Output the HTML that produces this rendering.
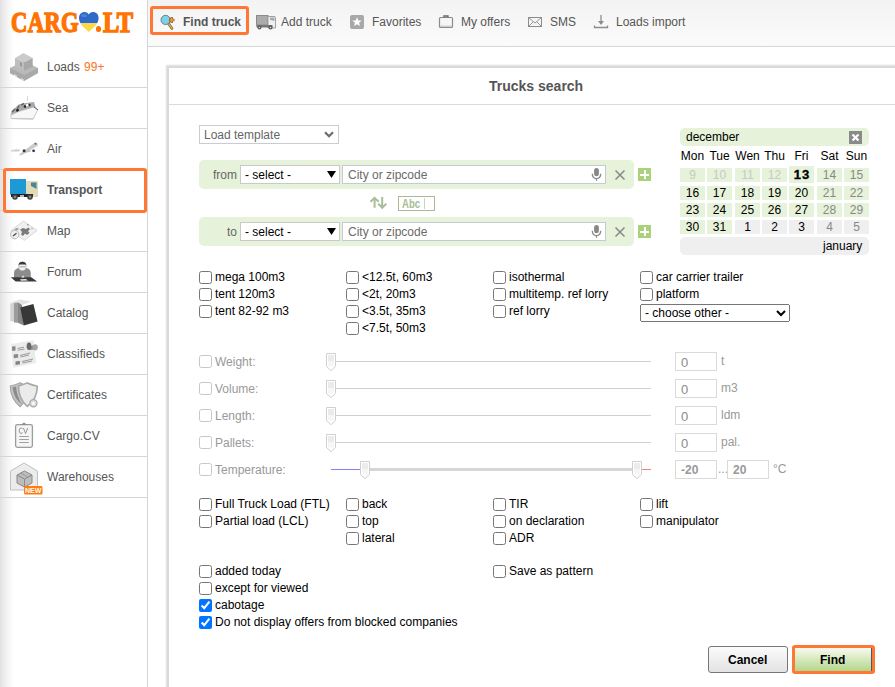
<!DOCTYPE html>
<html><head><meta charset="utf-8">
<style>
*{box-sizing:border-box}
html,body{margin:0;padding:0;width:895px;height:687px;overflow:hidden;background:#fff;font-family:"Liberation Sans",sans-serif;font-size:12px;color:#000}
.a{position:absolute}
.t{position:absolute;white-space:nowrap;line-height:14px}
#side{position:absolute;left:0;top:0;width:148px;height:687px;background:linear-gradient(to right,#e2e2e2 0px,#efefef 5px,#f7f7f7 9px,#fdfdfd 13px,#fff 16px);border-right:1px solid #d4d4d4}
.sep{position:absolute;left:0;width:147px;height:1px;background:#d6d6d6}
.si{position:absolute;left:47px;color:#555;line-height:14px;white-space:nowrap}
#top{position:absolute;left:148px;top:0;width:747px;height:47px;background:linear-gradient(#f3f3f3,#fbfbfb);border-bottom:1px solid #d6d6d6}
.nv{position:absolute;top:15px;color:#555;line-height:14px;white-space:nowrap}
.ob{position:absolute;border:3px solid #fe7834;border-radius:3px}
#dlg{position:absolute;left:169px;top:68px;width:760px;height:700px;background:#fff;box-shadow:0 0 0 2px #d9d9d9,0 0 1.5px 3px #dedede}
input[type=checkbox]{position:absolute;margin:0;width:13px;height:13px}
.lb{position:absolute;white-space:nowrap;line-height:14px}
.gr{color:#999}
.green{position:absolute;background:#e6f2d9;border-radius:5px}
.sel{position:absolute;background:#fff;border:1px solid #c9c9c9}
.cell{position:absolute;width:25px;height:14px;line-height:14px;text-align:center;background:#e6f2d9}
.cell.j{background:#efefef}
.cell.p{color:#c8c8c8}
.cell.w{color:#888}
.inp{position:absolute;width:42px;height:19px;border:1px solid #dadada;background:#fff;color:#999;font-weight:bold;line-height:19px;padding-left:5px;-webkit-font-smoothing:antialiased}
.inp.z{font-weight:normal;font-size:13px;color:#8a8a8a}
.trk{position:absolute;height:1px;background:#d0d0d0}
</style></head><body>

<!-- SIDEBAR -->
<div id="side"></div>
<!-- logo -->
<div class="t" style="left:11px;top:4px;font-family:'Liberation Serif',serif;font-weight:bold;font-size:27px;line-height:32px;color:#ff7300;-webkit-text-stroke:1.3px #ff7300;letter-spacing:0.3px;transform:scale(0.84,1.1);transform-origin:left top">CARG</div>
<svg class="a" style="left:78px;top:11px" width="23" height="22" viewBox="0 0 23 22">
 <defs><clipPath id="hc"><path d="M10.8 21 C7 17 1 13.5 1 7 C1 3.3 3.5 1 6.5 1 C8.8 1 10 2.2 10.8 3.5 C11.6 2.2 12.8 1 15.1 1 C18.1 1 20.6 3.3 20.6 7 C20.6 13.5 14.6 17 10.8 21Z"/></clipPath></defs>
 <g clip-path="url(#hc)"><rect x="0" y="0" width="23" height="12.3" fill="#2f6ac8"/><rect x="0" y="12.3" width="23" height="10" fill="#fcd843"/><ellipse cx="6" cy="4.5" rx="3" ry="1.6" fill="#5b8ae0" opacity="0.7"/></g>
</svg>
<div class="a" style="left:95.5px;top:26px;width:5.5px;height:5.5px;border-radius:3px;background:#ff7300"></div>
<div class="t" style="left:103px;top:4px;font-family:'Liberation Serif',serif;font-weight:bold;font-size:27px;line-height:32px;color:#ff7300;-webkit-text-stroke:1.3px #ff7300;letter-spacing:-0.4px;transform:scale(0.91,1.1);transform-origin:left top">LT</div>


<!-- sidebar icons -->
<svg class="a" style="left:0;top:47px" width="45" height="40">
 <path d="M10 21 L24 14 L38 21 L38 26 L24 34 L10 26 Z" fill="#b9b9b9"/>
 <path d="M10 21 L24 28 L38 21 L38 26 L24 34 L10 26 Z" fill="#a9a9a9"/>
 <path d="M14 27 L17 28.5 L17 30 L14 28.5Z M21 31 L24 32.5 L24 34 L21 32.5Z" fill="#fff" opacity="0.6"/>
 <path d="M15 11 L23.5 6 L32.7 11 L24 15.5 Z" fill="#cbcbcb"/>
 <path d="M15 11 L24 15.5 L24 24 L15 20 Z" fill="#bdbdbd"/>
 <path d="M24 15.5 L32.7 11 L32.7 19.5 L24 24 Z" fill="#a8a8a8"/>
 <path d="M20 15 L22 16 L22 20 L20 19Z" fill="#999"/>
</svg>
<svg class="a" style="left:0;top:88px" width="45" height="40">
 <path d="M10.5 27 L12 22.5 L15 20 L18.5 16.5 L26 15 L34 14 L35.5 19 L18.7 23.5 Z" fill="#a8a8a8"/>
 <path d="M12 24 L15 21 M17 22 L19 17.5 M21 17 L24 15.5" stroke="#666" stroke-width="1.4"/>
 <circle cx="17.5" cy="22.5" r="1.4" fill="#222"/><circle cx="25" cy="18.5" r="1.3" fill="#222"/><circle cx="29.5" cy="17" r="1.2" fill="#333"/>
 <path d="M26 16.5 L28 15.5 L28.5 18 L26 18.5Z" fill="#fff"/>
 <path d="M10.8 27.7 L18.7 23.5 L34 19 L37.8 21.7 L33.1 31 L11.3 30.5 Z" fill="#f7f7f7" stroke="#b8b8b8" stroke-width="0.7"/>
 <path d="M11.3 30.5 L33.1 31" stroke="#c4c4c4" stroke-width="1.2"/>
 <path d="M34 19 L37.8 21.7" stroke="#555" stroke-width="1"/>
 <path d="M27.5 8 V13" stroke="#ccc" stroke-width="0.8"/>
</svg>
<svg class="a" style="left:0;top:129px" width="45" height="40">
 <path d="M10.7 21.6 L16 20.3 L20.5 20.8 L19 22.6 L11 22.4 Z" fill="#cfcfcf"/>
 <path d="M19 25.5 L34.5 13.8 L37.5 14 L38 16.5 L23 25.5 L20 26.5 Z" fill="#cbcbcb"/>
 <path d="M22 23 L29 20 L31 22.5 L25 24Z" fill="#c4c4c4"/>
 <circle cx="24.1" cy="21.8" r="1.5" fill="#333"/><circle cx="33.6" cy="21.8" r="1.4" fill="#333"/>
 <circle cx="35.5" cy="14.7" r="1" fill="#666"/>
</svg>
<svg class="a" style="left:0;top:170px" width="45" height="40">
 <rect x="10" y="9" width="16" height="15.5" fill="#1d9ad6"/>
 <path d="M26 11 L37 11 Q38 11 38 12 L38 27 L26 27 Z" fill="#e0dcb8"/>
 <path d="M31 12.5 L36.5 12.5 L36.5 19 L33 17 L31 16 Z" fill="#4b8496"/>
 <rect x="11" y="24" width="22" height="3" fill="#222"/>
 <circle cx="15" cy="27" r="2.8" fill="#444"/><circle cx="30" cy="27" r="2.8" fill="#444"/>
 <circle cx="15" cy="27" r="1.2" fill="#888"/><circle cx="30" cy="27" r="1.2" fill="#888"/>
 <rect x="20" y="25" width="4" height="2" fill="#bbb"/>
</svg>
<svg class="a" style="left:0;top:211px" width="45" height="40">
 <path d="M10.8 19.8 L23.4 10 L37.1 19.4 L24.3 29.4 Z" fill="#f0f0f0" stroke="#cfcfcf" stroke-width="0.8"/>
 <path d="M14 18.5 L17 17 L19 17.8 L17 19.5 Z" fill="#999"/>
 <path d="M20 18.5 L23 17 L26 18 L28.5 16.5 L30 18.5 L28 20 L29.5 22 L27 24 L25 22.5 L23 25 L21 23.5 L22 21 Z" fill="#7a7a7a"/>
 <path d="M26.5 12.8 L29 13.5 L28 15 Z M31.5 16.5 L33 17.5 L31.5 18.5 Z" fill="#999"/>
 <circle cx="14.75" cy="23.6" r="4.2" fill="#efefef" stroke="#b5b5b5" stroke-width="0.9"/>
 <path d="M13 25 L16.5 22.2" stroke="#444" stroke-width="1.1"/>
</svg>
<svg class="a" style="left:0;top:252px" width="45" height="40">
 <path d="M14 26 L14 21 Q14 15.5 22.4 15.5 Q30.8 15.5 30.8 21 L30.8 26 Z" fill="#8c8c8c"/>
 <ellipse cx="22.4" cy="14.3" rx="3.7" ry="4.3" fill="#f2f2f2" stroke="#bbb" stroke-width="0.5"/>
 <path d="M18.6 14 Q18.3 9.8 22.4 9.8 Q26.5 9.8 26.3 14 L25.5 12.5 L19.5 12.5 Z" fill="#3a3a3a"/>
 <path d="M19.3 14.8 H25.5" stroke="#999" stroke-width="0.9"/>
 <path d="M10.8 25.2 L31.3 25.2 L37.1 29.6 L15.7 29.6 Z" fill="#3a3a3a"/>
 <path d="M20 27.2 L26 27 L28 28.6 L21 28.8 Z" fill="#e6e6e6"/>
 <path d="M21 25.5 L23.5 23.5 L24.5 25.5Z" fill="#eee"/>
</svg>
<svg class="a" style="left:0;top:293px" width="45" height="40">
 <path d="M10.3 9.5 L20 6.5 L31 8.5 L22 12 Z" fill="#e4e4e4"/>
 <path d="M10.3 10.5 L14 10 L14 28.5 L10.3 28.2 Z" fill="#d2d2d2"/>
 <path d="M14 10 L18 9.5 L18 29.8 L14 29.5 Z" fill="#9c9c9c"/>
 <path d="M18 9.5 L22 12 L23.8 32.4 L18 29.8 Z" fill="#868686"/>
 <path d="M20.3 14.5 L33.4 11 L37.6 28.5 L23.8 32.4 Z" fill="#383838"/>
</svg>
<svg class="a" style="left:0;top:334px" width="45" height="40">
 <path d="M10.8 10 L33.6 6.3 L36 29 L13.1 33.8 Z" fill="#ebebeb"/>
 <path d="M12 12.6 L15.5 12.2 L15.5 16.5 L12.2 17 Z" fill="#888"/>
 <path d="M13.6 20.6 L18 20 L18.3 23.6 L13.9 24.2 Z" fill="#888"/>
 <path d="M15.4 27.5 L19.8 26.8 L20 30.3 L15.6 31 Z" fill="#858585"/>
 <path d="M17.5 14.5 L24 13.2 M17.8 16.2 L24.5 15 M20 21.5 L30 19 M20.5 23 L29 21 M22 27.5 L33 25 M22.3 29 L32 27" stroke="#9a9a9a" stroke-width="1"/>
 <path d="M29 12.2 L35.5 11 L35.5 15.5 L29 16 Z" fill="#8a8a8a"/>
 <ellipse cx="35.2" cy="13.3" rx="2.6" ry="3.1" fill="#a5a5a5"/>
 <ellipse cx="29" cy="12.3" rx="2.4" ry="3.8" fill="#6a6a6a"/>
</svg>
<svg class="a" style="left:0;top:375px" width="45" height="40">
 <path d="M10.3 11 Q15 10 20.3 7.7 Q24 10 28 11 Q28 24 20.3 31.7 Q10.3 24 10.3 11 Z" fill="#c4c4c4" stroke="#a8a8a8" stroke-width="1.2"/>
 <path d="M12.5 12.5 L16 11.5 Q17 22 22 29.5 Q14 24 12.5 12.5 Z" fill="#8c8c8c"/>
 <path d="M18.5 11 Q23 10 27.3 7.9 Q32 10 37.3 11.3 Q37.3 24 27.3 31.4 Q18.5 24 18.5 11 Z" fill="#ebebeb" stroke="#a8a8a8" stroke-width="1.6"/>
 <circle cx="33.4" cy="28.2" r="3.6" fill="#dcdcdc" stroke="#a8a8a8" stroke-width="1.2"/>
 <path d="M33.4 25.9 L34 27.5 L35.6 27.6 L34.4 28.7 L34.8 30.3 L33.4 29.4 L32 30.3 L32.4 28.7 L31.2 27.6 L32.8 27.5 Z" fill="#fff"/>
</svg>
<svg class="a" style="left:0;top:416px" width="45" height="40">
 <rect x="15.6" y="8.6" width="16.8" height="22.8" rx="1.8" fill="#f5f5f5" stroke="#9c9c9c" stroke-width="1.3"/>
 <path d="M21 8.8 L24 6.6 L27 8.8 Z" fill="#888"/>
 <path d="M22.6 12.8 Q22 12 21 12 Q19.2 12 19.2 14.7 Q19.2 17.4 21 17.4 Q22 17.4 22.6 16.6" fill="none" stroke="#8a8a8a" stroke-width="0.9"/>
 <path d="M23.5 12 L25.5 17.5 L27.8 12" fill="none" stroke="#8a8a8a" stroke-width="0.9"/>
 <path d="M19.2 20.5 H28.8 M19.2 23.5 H28.8 M19.2 26.5 H28.8" stroke="#8c8c8c" stroke-width="0.8"/>
</svg>
<svg class="a" style="left:0;top:457px" width="48" height="40">
 <path d="M10.5 14 L24 6 L37.5 14 L37.5 33 L10.5 33 Z" fill="#ececec" stroke="#c0c0c0" stroke-width="1"/>
 <path d="M17 18 L24.5 14 L32 18 L32 26 L24.5 30 L17 26 Z" fill="#bdbdbd" stroke="#8a8a8a" stroke-width="1"/>
 <path d="M17 18 L24.5 22 L32 18 M24.5 22 V30" stroke="#8a8a8a" stroke-width="1" fill="none"/>
 <path d="M20.5 16 L28 20" stroke="#999" stroke-width="1"/>
 <rect x="24" y="29" width="18.5" height="8.5" rx="1.5" fill="#ff7c0f"/>
 <text x="33.2" y="36" font-family="Liberation Sans" font-weight="bold" font-size="7" fill="#fff" text-anchor="middle">NEW</text>
</svg>

<div class="sep" style="top:87px"></div>
<div class="sep" style="top:128px"></div>
<div class="sep" style="top:169px"></div>
<div class="sep" style="top:210px"></div>
<div class="sep" style="top:251px"></div>
<div class="sep" style="top:292px"></div>
<div class="sep" style="top:333px"></div>
<div class="sep" style="top:374px"></div>
<div class="sep" style="top:415px"></div>
<div class="sep" style="top:456px"></div>
<div class="sep" style="top:497px"></div>

<div class="si" style="top:60px">Loads <span style="color:#fb7424;margin-left:1px">99+</span></div>
<div class="si" style="top:101px">Sea</div>
<div class="si" style="top:142px">Air</div>
<div class="si" style="top:183px;font-weight:bold">Transport</div>
<div class="si" style="top:224px">Map</div>
<div class="si" style="top:265px">Forum</div>
<div class="si" style="top:306px">Catalog</div>
<div class="si" style="top:347px">Classifieds</div>
<div class="si" style="top:388px">Certificates</div>
<div class="si" style="top:429px">Cargo.CV</div>
<div class="si" style="top:470px">Warehouses</div>
<div class="ob" style="left:3px;top:168px;width:144px;height:45px"></div>

<!-- TOP BAR -->
<div id="top"></div>
<div class="ob" style="left:150px;top:6px;width:99px;height:29px"></div>

<!-- top icons -->
<svg class="a" style="left:156px;top:10px" width="24" height="22">
 <path d="M12.5 13.5 L16 18.5" stroke="#6b5a2a" stroke-width="2.6" stroke-linecap="round"/>
 <path d="M12.5 13.5 L16 18.5" stroke="#d4aa4c" stroke-width="1.4" stroke-linecap="round"/>
 <circle cx="9.6" cy="9.9" r="4.6" fill="#7fd0ea" stroke="#555" stroke-width="0.7"/>
 <path d="M15.7 7.3 V12.7 M13 10 H18.4" stroke="#7a4a1a" stroke-width="2.6"/>
 <path d="M15.7 7.8 V12.2 M13.5 10 H17.9" stroke="#f49a2e" stroke-width="1.6"/>
</svg>
<svg class="a" style="left:252px;top:10px" width="28" height="22">
 <rect x="4.5" y="5.5" width="11.5" height="9.5" fill="#ababab" stroke="#8a8a8a" stroke-width="1"/>
 <path d="M16 6.5 L23 6.5 L23.5 7.5 L23.5 18 L16 18 Z" fill="#f0f0f0" stroke="#999" stroke-width="0.9"/>
 <path d="M18 7.5 L22.5 7.5 L22.5 11 L18 10 Z" fill="#aaa"/>
 <rect x="4.5" y="15" width="16" height="2.5" fill="#777"/>
 <circle cx="7.5" cy="17.5" r="2" fill="#555"/><circle cx="18.5" cy="17.5" r="2" fill="#555"/>
 <circle cx="7.5" cy="17.5" r="0.8" fill="#ddd"/><circle cx="18.5" cy="17.5" r="0.8" fill="#ddd"/>
</svg>
<svg class="a" style="left:350px;top:15px" width="14" height="14">
 <rect x="0" y="0" width="14" height="14" rx="2" fill="#a8a8a8"/>
 <path d="M7 2.2 L8.3 5.4 L11.6 5.6 L9.1 7.7 L9.9 11 L7 9.2 L4.1 11 L4.9 7.7 L2.4 5.6 L5.7 5.4 Z" fill="#fff"/>
</svg>
<svg class="a" style="left:434px;top:10px" width="24" height="22">
 <rect x="5.5" y="7.5" width="13" height="10" rx="1" fill="#f6f6f6" stroke="#8c8c8c" stroke-width="1.2"/>
 <path d="M10 7.5 L10 6 L14 6 L14 7.5" fill="none" stroke="#666" stroke-width="1.3"/>
 <rect x="6" y="15.5" width="12" height="1.5" fill="#cfcfcf"/>
</svg>
<svg class="a" style="left:522px;top:10px" width="24" height="22">
 <rect x="6.5" y="7.5" width="13" height="9" fill="#f6f6f6" stroke="#8c8c8c" stroke-width="1"/>
 <path d="M6.5 7.5 L13 13 L19.5 7.5 M6.5 16.5 L11 12 M19.5 16.5 L15 12" fill="none" stroke="#8c8c8c" stroke-width="0.9"/>
</svg>
<svg class="a" style="left:590px;top:10px" width="24" height="22">
 <path d="M11 5 V14" stroke="#8c8c8c" stroke-width="1.3"/>
 <path d="M8 11 L11 15 L14 11 Z" fill="#8c8c8c"/>
 <path d="M4.5 15.5 V17.5 H17.5 V15.5" fill="none" stroke="#8c8c8c" stroke-width="1.3"/>
</svg>

<div class="nv" style="left:183px;font-weight:bold">Find truck</div>
<div class="nv" style="left:281px">Add truck</div>
<div class="nv" style="left:372px">Favorites</div>
<div class="nv" style="left:461px">My offers</div>
<div class="nv" style="left:550px">SMS</div>
<div class="nv" style="left:616px">Loads import</div>

<!-- DIALOG -->
<div id="dlg"></div>
<div class="a" style="left:169px;top:104px;width:726px;height:1px;background:#dcdcdc"></div>
<div class="t" style="left:489px;top:78px;font-size:14px;line-height:16px;font-weight:bold;color:#555">Trucks search</div>

<!-- load template -->
<div class="sel" style="left:199px;top:125px;width:140px;height:19px;border-color:#c8ccd4"></div>
<div class="t" style="left:204px;top:128px;color:#666">Load template</div>

<!-- from / to -->
<div class="green" style="left:199px;top:160px;width:435px;height:29px"></div>
<div class="green" style="left:199px;top:217px;width:435px;height:29px"></div>
<div class="t" style="left:213px;top:168px;color:#666">from</div>
<div class="t" style="left:227px;top:225px;color:#666">to</div>
<div class="sel" style="left:240px;top:165px;width:100px;height:19px"></div>
<div class="sel" style="left:240px;top:222px;width:100px;height:19px"></div>
<div class="t" style="left:245px;top:168px">- select -</div>
<div class="t" style="left:245px;top:225px">- select -</div>
<div class="sel" style="left:342px;top:165px;width:264px;height:19px;border-color:#c5cad5"></div>
<div class="sel" style="left:342px;top:222px;width:264px;height:19px;border-color:#c5cad5"></div>
<div class="t" style="left:348px;top:168px;color:#6a6a6a">City or zipcode</div>
<div class="t" style="left:348px;top:225px;color:#6a6a6a">City or zipcode</div>

<!-- calendar -->
<div class="green" style="left:680px;top:128px;width:189px;height:18px;border-radius:5px"></div>
<div class="t" style="left:686px;top:130px">december</div>

<div class="cell" style="left:680px;top:149px;background:none">Mon</div>
<div class="cell" style="left:707px;top:149px;background:none">Tue</div>
<div class="cell" style="left:735px;top:149px;background:none">Wen</div>
<div class="cell" style="left:762px;top:149px;background:none">Thu</div>
<div class="cell" style="left:789px;top:149px;background:none">Fri</div>
<div class="cell" style="left:817px;top:149px;background:none">Sat</div>
<div class="cell" style="left:844px;top:149px;background:none">Sun</div>
<div class="cell p" style="left:680px;top:168px">9</div>
<div class="cell p" style="left:707px;top:168px">10</div>
<div class="cell p" style="left:735px;top:168px">11</div>
<div class="cell p" style="left:762px;top:168px">12</div>
<div class="cell" style="left:789px;top:166px;height:17px;line-height:18px;font-weight:bold;font-size:13px;letter-spacing:1px;text-indent:1px;-webkit-text-stroke:0.35px #000">13</div>
<div class="cell w" style="left:817px;top:168px">14</div>
<div class="cell w" style="left:844px;top:168px">15</div>
<div class="cell" style="left:680px;top:186px">16</div>
<div class="cell" style="left:707px;top:186px">17</div>
<div class="cell" style="left:735px;top:186px">18</div>
<div class="cell" style="left:762px;top:186px">19</div>
<div class="cell" style="left:789px;top:186px">20</div>
<div class="cell w" style="left:817px;top:186px">21</div>
<div class="cell w" style="left:844px;top:186px">22</div>
<div class="cell" style="left:680px;top:203px">23</div>
<div class="cell" style="left:707px;top:203px">24</div>
<div class="cell" style="left:735px;top:203px">25</div>
<div class="cell" style="left:762px;top:203px">26</div>
<div class="cell" style="left:789px;top:203px">27</div>
<div class="cell w" style="left:817px;top:203px">28</div>
<div class="cell w" style="left:844px;top:203px">29</div>
<div class="cell" style="left:680px;top:220px">30</div>
<div class="cell" style="left:707px;top:220px">31</div>
<div class="cell j" style="left:735px;top:220px">1</div>
<div class="cell j" style="left:762px;top:220px">2</div>
<div class="cell j" style="left:789px;top:220px">3</div>
<div class="cell j w" style="left:817px;top:220px">4</div>
<div class="cell j w" style="left:844px;top:220px">5</div>
<div class="a" style="left:680px;top:237px;width:189px;height:18px;background:#efefef;border-radius:5px"></div>
<div class="t" style="left:823px;top:239px">january</div>


<!-- form icons -->
<svg class="a" style="left:318px;top:122px" width="24" height="24"><path d="M7 10.2 L11 14.2 L15 10.2" fill="none" stroke="#6e6e6e" stroke-width="2.3"/></svg>
<svg class="a" style="left:320px;top:165px" width="20" height="20"><path d="M7 6 L16 6 L11.5 13 Z" fill="#000"/></svg>
<svg class="a" style="left:320px;top:222px" width="20" height="20"><path d="M7 6 L16 6 L11.5 13 Z" fill="#000"/></svg>
<svg class="a" style="left:586px;top:163px" width="44" height="23">
 <rect x="8.1" y="4.9" width="4.8" height="8.4" rx="2.4" fill="#888"/>
 <path d="M6.3 10.8 Q6.3 15.6 10.5 15.6 Q14.7 15.6 14.7 10.8" fill="none" stroke="#888" stroke-width="1.3"/>
 <rect x="9.9" y="15.4" width="1.2" height="2.4" fill="#888"/>
 <path d="M29.5 7.5 L38.5 16.5 M38.5 7.5 L29.5 16.5" stroke="#888" stroke-width="1.5"/>
</svg>
<svg class="a" style="left:586px;top:220px" width="44" height="23">
 <rect x="8.1" y="4.9" width="4.8" height="8.4" rx="2.4" fill="#888"/>
 <path d="M6.3 10.8 Q6.3 15.6 10.5 15.6 Q14.7 15.6 14.7 10.8" fill="none" stroke="#888" stroke-width="1.3"/>
 <rect x="9.9" y="15.4" width="1.2" height="2.4" fill="#888"/>
 <path d="M29.5 7.5 L38.5 16.5 M38.5 7.5 L29.5 16.5" stroke="#888" stroke-width="1.5"/>
</svg>
<svg class="a" style="left:638px;top:168px" width="13" height="13"><rect width="13" height="13" fill="#aad27a"/><rect x="2" y="6" width="9" height="2" fill="#fff"/><rect x="6" y="2" width="2" height="9" fill="#fff"/></svg>
<svg class="a" style="left:638px;top:225px" width="13" height="13"><rect width="13" height="13" fill="#aad27a"/><rect x="2" y="6" width="9" height="2" fill="#fff"/><rect x="6" y="2" width="2" height="9" fill="#fff"/></svg>
<svg class="a" style="left:366px;top:192px" width="26" height="20">
 <path d="M8.6 6 V15.7 M4.5 9.8 L8.6 5.8 L12.7 9.8 M16.2 5 V15.6 M12.2 11.6 L16.2 15.8 L20.3 11.6" fill="none" stroke="#abbc98" stroke-width="2"/>
</svg>
<div class="a" style="left:398px;top:196px;width:37px;height:15px;border:1px solid #a9bb94"></div>
<div class="t" style="left:402px;top:197px;font-weight:bold;color:#a9bb94;transform:scaleX(0.8);transform-origin:left">Abc</div>
<div class="a" style="left:424px;top:198px;width:1px;height:11px;background:#c9d3bd"></div>
<svg class="a" style="left:849px;top:131px" width="13" height="13"><rect width="13" height="13" fill="#8a8a8a"/><path d="M3.5 3.5 L9.5 9.5 M9.5 3.5 L3.5 9.5" stroke="#fff" stroke-width="2.2"/></svg>

<!-- checkboxes section 1 -->
<input type="checkbox" style="left:199px;top:271px"><div class="lb" style="left:215px;top:270px">mega 100m3</div>
<input type="checkbox" style="left:199px;top:288px"><div class="lb" style="left:215px;top:287px">tent 120m3</div>
<input type="checkbox" style="left:199px;top:305px"><div class="lb" style="left:215px;top:304px">tent 82-92 m3</div>
<input type="checkbox" style="left:346px;top:271px"><div class="lb" style="left:362px;top:270px">&lt;12.5t, 60m3</div>
<input type="checkbox" style="left:346px;top:288px"><div class="lb" style="left:362px;top:287px">&lt;2t, 20m3</div>
<input type="checkbox" style="left:346px;top:305px"><div class="lb" style="left:362px;top:304px">&lt;3.5t, 35m3</div>
<input type="checkbox" style="left:346px;top:322px"><div class="lb" style="left:362px;top:321px">&lt;7.5t, 50m3</div>
<input type="checkbox" style="left:493px;top:271px"><div class="lb" style="left:509px;top:270px">isothermal</div>
<input type="checkbox" style="left:493px;top:288px"><div class="lb" style="left:509px;top:287px">multitemp. ref lorry</div>
<input type="checkbox" style="left:493px;top:305px"><div class="lb" style="left:509px;top:304px">ref lorry</div>
<input type="checkbox" style="left:640px;top:271px"><div class="lb" style="left:656px;top:270px">car carrier trailer</div>
<input type="checkbox" style="left:640px;top:288px"><div class="lb" style="left:656px;top:287px">platform</div>

<select style="position:absolute;left:640px;top:304px;width:150px;height:18px;font-family:'Liberation Sans',sans-serif;font-size:12px;margin:0"><option>- choose other -</option></select>
<!-- sliders -->
<input type="checkbox" style="opacity:0.4;left:199px;top:355px"><div class="lb gr" style="left:215px;top:355px">Weight:</div>
<input type="checkbox" style="opacity:0.4;left:199px;top:382px"><div class="lb gr" style="left:215px;top:382px">Volume:</div>
<input type="checkbox" style="opacity:0.4;left:199px;top:409px"><div class="lb gr" style="left:215px;top:409px">Length:</div>
<input type="checkbox" style="opacity:0.4;left:199px;top:436px"><div class="lb gr" style="left:215px;top:436px">Pallets:</div>
<input type="checkbox" style="opacity:0.4;left:199px;top:463px"><div class="lb gr" style="left:215px;top:463px">Temperature:</div>

<div class="trk" style="left:336px;top:361px;width:315px"></div>
<div class="trk" style="left:336px;top:388px;width:315px"></div>
<div class="trk" style="left:336px;top:415px;width:315px"></div>
<div class="trk" style="left:336px;top:442px;width:315px"></div>
<div class="a" style="left:331px;top:469px;width:29px;height:1px;background:#8080f0"></div>
<div class="a" style="left:370px;top:468px;width:262px;height:3px;background:#d6d6d6"></div>
<div class="a" style="left:642px;top:469px;width:9px;height:1px;background:#f08080"></div>

<svg class="a" style="left:326px;top:353px" width="10" height="19"><path d="M0.5 0.5 H9.5 V13.5 L5 17.7 L0.5 13.5 Z" fill="#fff" stroke="#d0d0d0"/><rect x="2" y="2" width="6" height="6.5" fill="#ebebeb"/><rect x="2" y="8.5" width="6" height="5" fill="#f6f6f6"/></svg>
<svg class="a" style="left:326px;top:380px" width="10" height="19"><path d="M0.5 0.5 H9.5 V13.5 L5 17.7 L0.5 13.5 Z" fill="#fff" stroke="#d0d0d0"/><rect x="2" y="2" width="6" height="6.5" fill="#ebebeb"/><rect x="2" y="8.5" width="6" height="5" fill="#f6f6f6"/></svg>
<svg class="a" style="left:326px;top:407px" width="10" height="19"><path d="M0.5 0.5 H9.5 V13.5 L5 17.7 L0.5 13.5 Z" fill="#fff" stroke="#d0d0d0"/><rect x="2" y="2" width="6" height="6.5" fill="#ebebeb"/><rect x="2" y="8.5" width="6" height="5" fill="#f6f6f6"/></svg>
<svg class="a" style="left:326px;top:434px" width="10" height="19"><path d="M0.5 0.5 H9.5 V13.5 L5 17.7 L0.5 13.5 Z" fill="#fff" stroke="#d0d0d0"/><rect x="2" y="2" width="6" height="6.5" fill="#ebebeb"/><rect x="2" y="8.5" width="6" height="5" fill="#f6f6f6"/></svg>
<svg class="a" style="left:360px;top:461px" width="10" height="19"><path d="M0.5 0.5 H9.5 V13.5 L5 17.7 L0.5 13.5 Z" fill="#fff" stroke="#d0d0d0"/><rect x="2" y="2" width="6" height="6.5" fill="#ebebeb"/><rect x="2" y="8.5" width="6" height="5" fill="#f6f6f6"/></svg>
<svg class="a" style="left:632px;top:461px" width="10" height="19"><path d="M0.5 0.5 H9.5 V13.5 L5 17.7 L0.5 13.5 Z" fill="#fff" stroke="#d0d0d0"/><rect x="2" y="2" width="6" height="6.5" fill="#ebebeb"/><rect x="2" y="8.5" width="6" height="5" fill="#f6f6f6"/></svg>
<div class="inp z" style="left:675px;top:352px">0</div><div class="lb gr" style="left:721px;top:354px">t</div>
<div class="inp z" style="left:675px;top:379px">0</div><div class="lb gr" style="left:721px;top:381px">m3</div>
<div class="inp z" style="left:675px;top:406px">0</div><div class="lb gr" style="left:721px;top:408px">ldm</div>
<div class="inp z" style="left:675px;top:433px">0</div><div class="lb gr" style="left:721px;top:435px">pal.</div>
<div class="inp" style="left:675px;top:460px">-20</div><div class="lb gr" style="left:718px;top:462px">...</div>
<div class="inp" style="left:727px;top:460px">20</div><div class="lb gr" style="left:773px;top:462px">°C</div>

<!-- section 3 -->
<input type="checkbox" style="left:199px;top:498px"><div class="lb" style="left:215px;top:497px">Full Truck Load (FTL)</div>
<input type="checkbox" style="left:199px;top:515px"><div class="lb" style="left:215px;top:514px">Partial load (LCL)</div>
<input type="checkbox" style="left:346px;top:498px"><div class="lb" style="left:362px;top:497px">back</div>
<input type="checkbox" style="left:346px;top:515px"><div class="lb" style="left:362px;top:514px">top</div>
<input type="checkbox" style="left:346px;top:532px"><div class="lb" style="left:362px;top:531px">lateral</div>
<input type="checkbox" style="left:493px;top:498px"><div class="lb" style="left:509px;top:497px">TIR</div>
<input type="checkbox" style="left:493px;top:515px"><div class="lb" style="left:509px;top:514px">on declaration</div>
<input type="checkbox" style="left:493px;top:532px"><div class="lb" style="left:509px;top:531px">ADR</div>
<input type="checkbox" style="left:640px;top:498px"><div class="lb" style="left:656px;top:497px">lift</div>
<input type="checkbox" style="left:640px;top:515px"><div class="lb" style="left:656px;top:514px">manipulator</div>

<!-- section 4 -->
<input type="checkbox" style="left:199px;top:565px"><div class="lb" style="left:215px;top:564px">added today</div>
<input type="checkbox" style="left:199px;top:582px"><div class="lb" style="left:215px;top:581px">except for viewed</div>
<input type="checkbox" checked style="left:199px;top:599px"><div class="lb" style="left:215px;top:598px">cabotage</div>
<input type="checkbox" checked style="left:199px;top:616px"><div class="lb" style="left:215px;top:615px">Do not display offers from blocked companies</div>
<input type="checkbox" style="left:493px;top:565px"><div class="lb" style="left:509px;top:564px">Save as pattern</div>

<!-- buttons -->
<div class="a" style="left:708px;top:646px;width:80px;height:27px;border:1px solid #777;border-radius:3px;background:linear-gradient(#fbfbfb,#e3e3e3)"></div>
<div class="t" style="left:728px;top:653px;font-weight:bold">Cancel</div>
<div class="ob" style="left:792px;top:645px;width:83px;height:29px"></div>
<div class="a" style="left:795px;top:648px;width:77px;height:23px;background:linear-gradient(#f7fbef,#b3d68a);border-right:1px solid #556"></div>
<div class="t" style="left:820px;top:653px;font-weight:bold">Find</div>

</body></html>
